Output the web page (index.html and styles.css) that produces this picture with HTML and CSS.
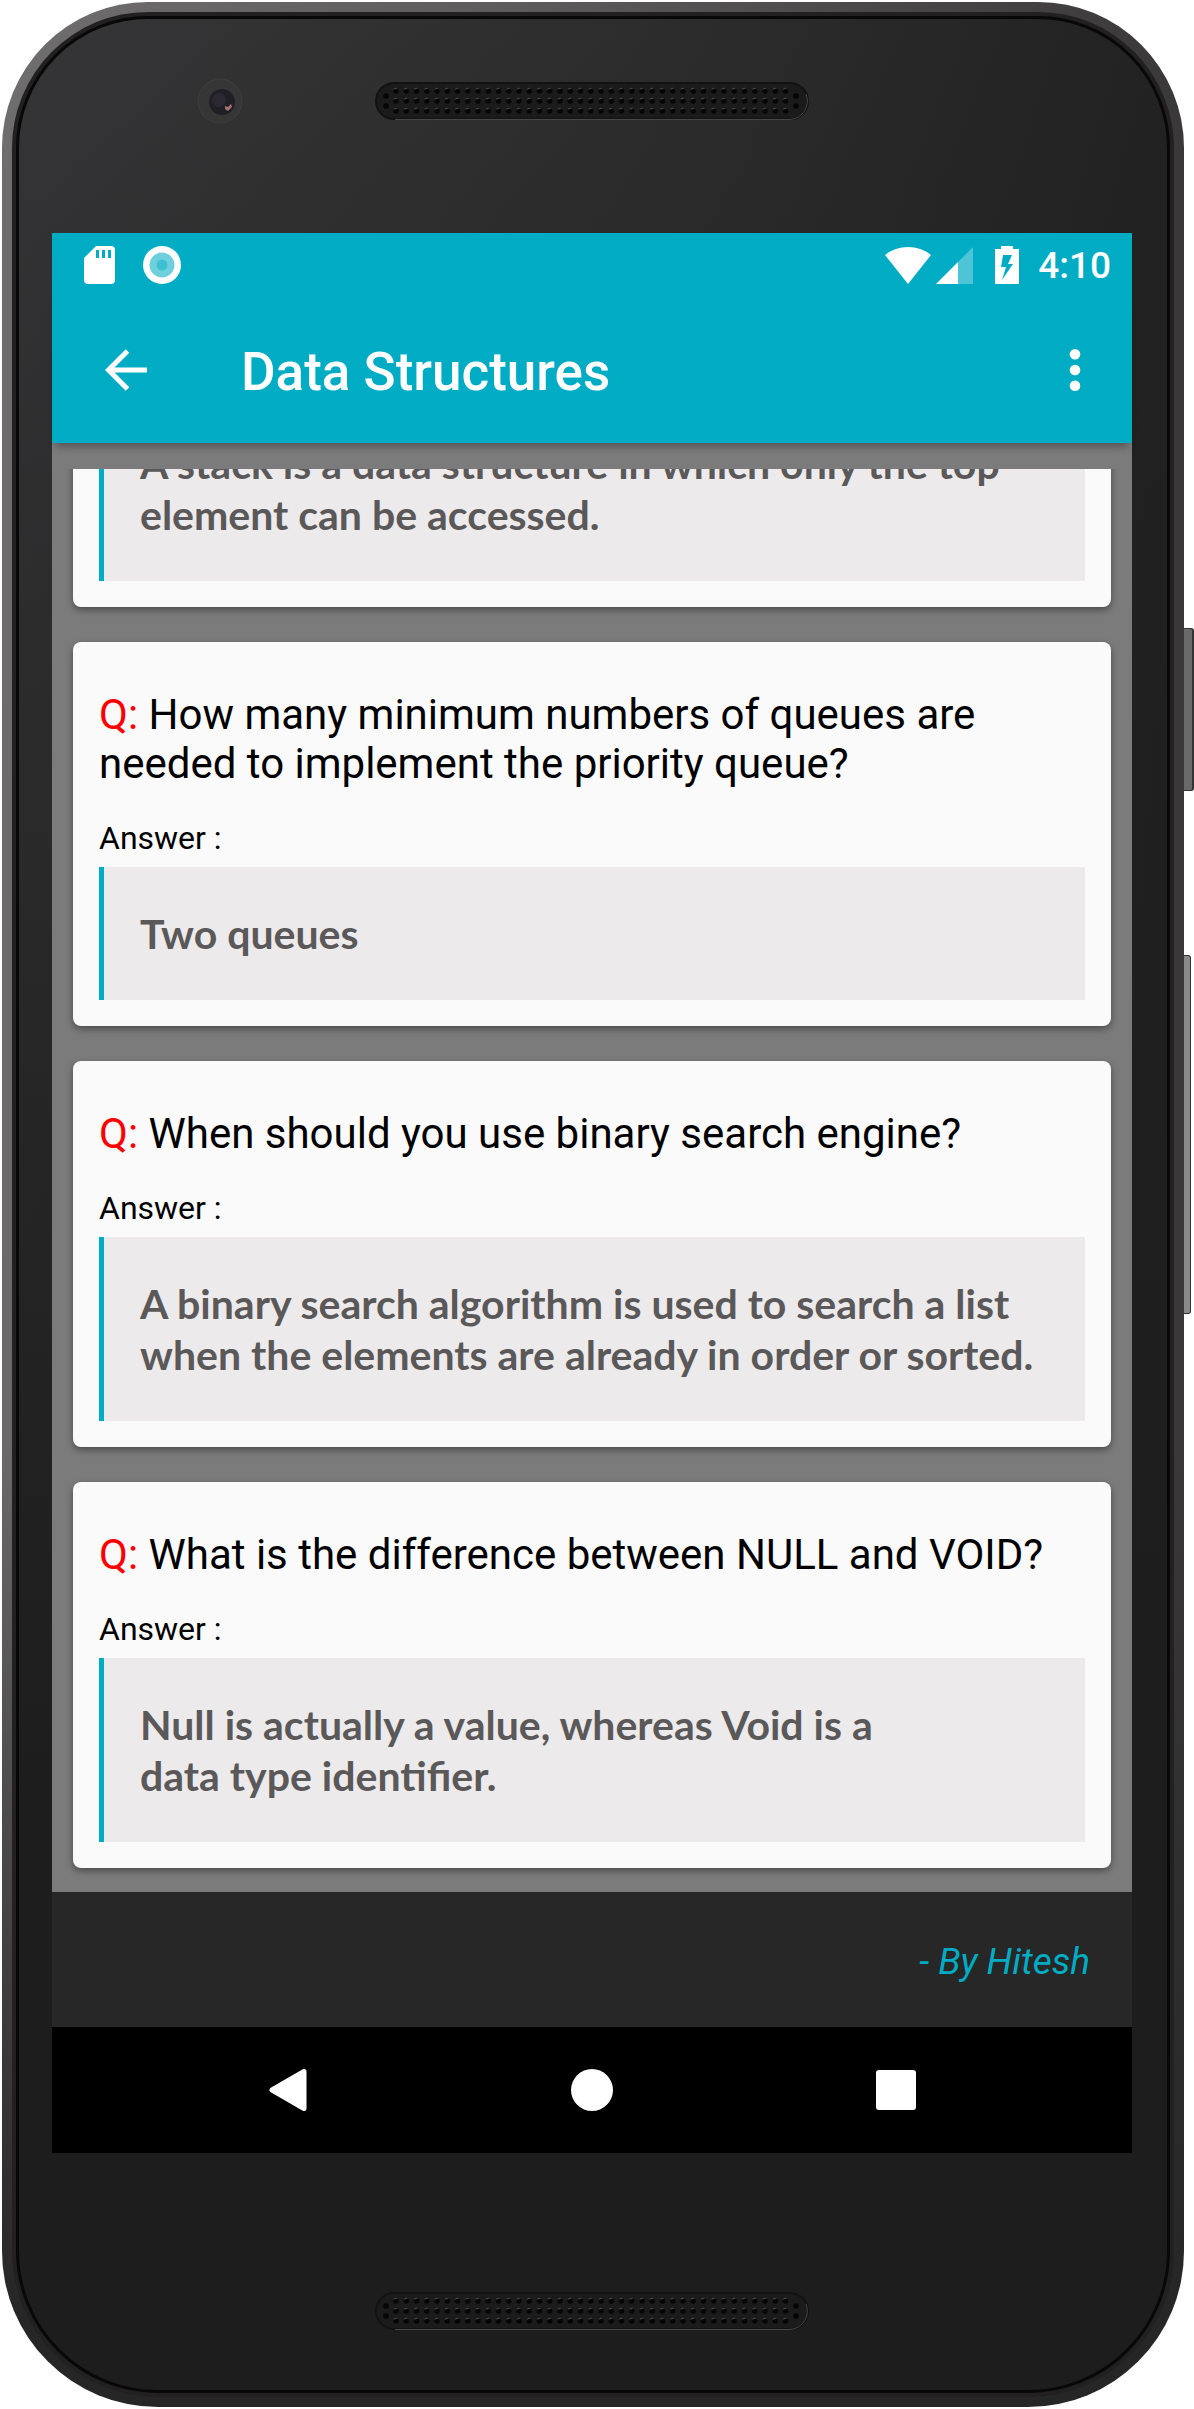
FILE: index.html
```html
<!DOCTYPE html>
<html lang="en">
<head>
<meta charset="utf-8">
<meta name="viewport" content="width=device-width, initial-scale=1">
<title>Data Structures</title>
<link rel="stylesheet" href="styles.css">
</head>
<body>
<div class="phone">
  <span class="side-key side-key-power"></span>
  <span class="side-key side-key-volume"></span>
  <div class="rim">
    <div class="face">
      <div class="bezel bezel-top">
        <svg class="camera" viewBox="0 0 46 46" aria-hidden="true">
          <circle cx="23" cy="23" r="22" fill="#363637" stroke="#3e3e3f"/>
          <circle cx="25" cy="24" r="13" fill="#211f26"/>
          <circle cx="22" cy="22" r="7" fill="#2b2833"/>
          <path d="M28 28l3 1 3-3 1 3-4 4-3-2z" fill="#a8726f"/>
        </svg>
        <svg class="speaker" viewBox="0 0 434 38" aria-hidden="true">
          <defs>
            <pattern id="holes" x="16" y="4" width="10.25" height="10" patternUnits="userSpaceOnUse">
              <circle cx="5" cy="5" r="2.8" fill="#050505"/>
              <path d="M3 3.4a3 3 0 0 1 3-1" stroke="#4a4a4a" fill="none"/>
            </pattern>
            <g id="grille">
              <rect x="1" y="1" width="432" height="36" rx="18" fill="#1b1b1b" stroke="#121212" stroke-width="2"/>
              <path d="M20 37.500H415A18.500 18.500 0 0 0 431 12" fill="none" stroke="#484848"/>
              <rect x="16" y="4" width="399.750" height="30" fill="url(#holes)"/>
              <g fill="#050505">
                <circle cx="11" cy="14" r="2.800"/><circle cx="11" cy="24" r="2.800"/>
                <circle cx="421" cy="14" r="2.800"/><circle cx="421" cy="24" r="2.800"/>
              </g>
            </g>
          </defs>
          <use href="#grille"/>
        </svg>
      </div>

      <div class="screen">
        <div class="status-bar">
          <div class="status-group status-left">
            <svg width="32" height="38" viewBox="0 0 32 38" role="img" aria-label="SD card">
              <path fill="#fff" fill-rule="evenodd" d="M12 0H27a4 4 0 0 1 4 4V34a4 4 0 0 1-4 4H4a4 4 0 0 1-4-4V12zM12 4v8h3V4zM18 4v8h3V4zM24 4v8h3V4z"/>
            </svg>
            <svg width="38" height="38" viewBox="0 0 38 38" role="img" aria-label="Sync">
              <circle cx="19" cy="19" r="19" fill="#fff"/>
              <circle cx="19" cy="19" r="12.500" fill="#6fd0dd"/>
              <circle cx="19" cy="19" r="5.500" fill="#3fc0d0"/>
            </svg>
          </div>
          <div class="status-group status-right">
            <svg width="46" height="38" viewBox="0 0 46 38" role="img" aria-label="Wi-Fi">
              <path fill="#fff" d="M0 9Q10 1 23 1T46 9L23 38z"/>
            </svg>
            <svg width="38" height="38" viewBox="0 0 38 38" role="img" aria-label="Mobile signal">
              <path fill="#fff" fill-opacity=".3" d="M37 1V38H22V16z"/>
              <path fill="#fff" d="M22 16V38H0z"/>
            </svg>
            <svg class="battery" width="24" height="38" viewBox="0 0 24 38" role="img" aria-label="Battery charging">
              <path fill="#fff" fill-rule="evenodd" d="M6 0H18V3H24V38H0V3H6zM8 9L6 21H11L7 34L18 18H13L17 9z"/>
            </svg>
            <span class="clock">4:10</span>
          </div>
        </div>

        <header class="app-bar">
          <button class="icon-button back" type="button" aria-label="Back">
            <svg width="42" height="42" viewBox="0 0 42 42"><path d="M42 21H4M22.500 2L3.500 21L22.500 40" fill="none" stroke="#fff" stroke-width="5"/></svg>
          </button>
          <h1 class="title">Data Structures</h1>
          <button class="icon-button more" type="button" aria-label="More options">
            <svg width="12" height="42" viewBox="0 0 12 42" fill="#fff"><circle cx="6" cy="5.300" r="5.300"/><circle cx="6" cy="21" r="5.300"/><circle cx="6" cy="36.700" r="5.300"/></svg>
          </button>
        </header>

        <main class="feed">
          <div class="cards">
            <article class="card">
              <p class="answer">A stack is a data structure in which only the top element can be accessed.</p>
            </article>
            <article class="card">
              <h2 class="question"><span class="mark">Q:</span> How many minimum numbers of queues are needed to implement the priority queue?</h2>
              <p class="label">Answer :</p>
              <p class="answer">Two queues</p>
            </article>
            <article class="card">
              <h2 class="question"><span class="mark">Q:</span> When should you use binary search engine?</h2>
              <p class="label">Answer :</p>
              <p class="answer">A binary search algorithm is used to search a list when the elements are already in order or sorted.</p>
            </article>
            <article class="card">
              <h2 class="question"><span class="mark">Q:</span> What is the difference between NULL and VOID?</h2>
              <p class="label">Answer :</p>
              <p class="answer">Null is actually a value, whereas Void is a<br>data type identifier.</p>
            </article>
          </div>
        </main>

        <footer class="byline">- By Hitesh</footer>

        <nav class="nav-bar" aria-label="System">
          <button class="nav-button" type="button" aria-label="Back">
            <svg width="42" height="42" viewBox="0 0 42 42"><path d="M5 21L37 2.500V39.500z" fill="#fff" stroke="#fff" stroke-width="5" stroke-linejoin="round"/></svg>
          </button>
          <button class="nav-button" type="button" aria-label="Home">
            <svg width="42" height="42" viewBox="0 0 42 42"><circle cx="21" cy="21" r="21" fill="#fff"/></svg>
          </button>
          <button class="nav-button" type="button" aria-label="Recent apps">
            <svg width="42" height="42" viewBox="0 0 42 42"><rect x="1" y="1" width="40" height="40" rx="3" fill="#fff"/></svg>
          </button>
        </nav>
      </div>

      <div class="bezel bezel-bottom">
        <svg class="speaker" viewBox="0 0 434 38" aria-hidden="true"><use href="#grille"/></svg>
      </div>
    </div>
  </div>
</div>
</body>
</html>
```
FILE: styles.css
```css
:root {
  --accent: #00acc4;
}

* {
  box-sizing: border-box;
}

body {
  margin: 0;
  padding: 2px 10px 2px 2px;
  height: 100vh;
  background: #fff;
  font-family: Roboto, "Liberation Sans", sans-serif;
}

h1, h2, p {
  margin: 0;
  font-weight: 400;
}

button {
  border: 0;
  padding: 0;
  background: none;
  display: flex;
  align-items: center;
  justify-content: center;
}

svg {
  display: block;
}

/* Device shell */
.phone {
  position: relative;
  height: 100%;
  padding: 10px;
  border-radius: 146px 146px 156px 156px;
  background:
    linear-gradient(180deg, transparent 60%, #262626 96%),
    linear-gradient(95deg, #6f6d6e 0%, #5e5c5d 35%, #3a3839 85%);
}

.side-key {
  position: absolute;
  left: 100%;
  border: 1px solid #333;
  border-left: 0;
  border-radius: 0 3px 3px 0;
  background: #6a6a6a;
}

.side-key-power {
  top: 626px;
  width: 10px;
  height: 163px;
  border-right-width: 2px;
}

.side-key-volume {
  top: 953px;
  width: 7px;
  height: 359px;
  background: #8a8a8a;
}

.rim {
  height: 100%;
  padding: 4px;
  border-radius: 136px 136px 146px 146px;
  background: #222021;
}

.face {
  display: flex;
  flex-direction: column;
  height: 100%;
  padding: 0 35px 0 33px;
  border: 3px solid #080808;
  border-radius: 132px 132px 142px 142px;
  background:
    linear-gradient(180deg, transparent, #1d1d1d 75%),
    linear-gradient(95deg, #353537, #2d2d2d 45%, #212121 90%);
}

.bezel {
  flex: none;
}

.bezel-top {
  display: grid;
  grid-template-columns: 1fr auto 1fr;
  align-items: center;
  justify-items: center;
  padding: 59px 0 109px;
}

.camera {
  width: 46px;
  margin-left: 12px;
}

.speaker {
  width: 434px;
  height: 38px;
}

.bezel-bottom {
  display: flex;
  justify-content: center;
  padding: 139px 0 60px;
}

/* App */
.screen {
  display: flex;
  flex: 1;
  flex-direction: column;
  min-height: 0;
  background: #7b7b7b;
}

.status-bar {
  display: flex;
  flex: none;
  align-items: center;
  justify-content: space-between;
  height: 63px;
  padding: 0 21px 0 32px;
  background: var(--accent);
  color: #fff;
}

.status-group {
  display: flex;
  align-items: center;
}

.status-left {
  gap: 27px;
}

.status-right {
  gap: 5px;
}

.battery {
  margin: 0 14px 0 16px;
}

.clock {
  padding-top: 2px;
  font-size: 37px;
  font-weight: 500;
  line-height: 44px;
}

.app-bar {
  display: flex;
  flex: none;
  align-items: center;
  height: 147px;
  background: var(--accent);
  color: #fff;
  box-shadow: 0 8px 8px -4px rgba(0, 0, 0, .3);
}

.icon-button {
  height: 147px;
}

.back {
  width: 147px;
}

.more {
  width: 114px;
}

.title {
  flex: 1;
  padding: 4px 0 0 42px;
  font-size: 53px;
  font-weight: 500;
  line-height: 62px;
}

/* Opens at the newest card: a reversed column starts scrolled to its end */
.feed {
  display: flex;
  flex: 1;
  flex-direction: column-reverse;
  min-height: 0;
  margin-top: 26px;
  overflow-y: auto;
  scrollbar-width: none;
}

.cards {
  display: flex;
  flex-direction: column;
  gap: 35px;
  padding: 24px 21px;
}

.card {
  padding: 48px 26px 26px;
  border-radius: 8px;
  background: #fafafa;
  box-shadow: 0 3px 7px rgba(0, 0, 0, .4);
}

.question {
  font-size: 42px;
  line-height: 49px;
  color: #000;
}

.mark {
  color: #f00;
}

.label {
  margin: 32px 0 10px;
  font-size: 32px;
  line-height: 37px;
}

.answer {
  padding: 41px 36px;
  border-left: 5px solid var(--accent);
  background: #eceaeb;
  color: #5a5858;
  font-family: Lato, "Open Sans", sans-serif;
  font-size: 41px;
  font-weight: 700;
  line-height: 51px;
}

.byline {
  flex: none;
  padding: 48px 42px 44px;
  background: #272727;
  color: var(--accent);
  font-size: 37px;
  font-style: italic;
  line-height: 43px;
  text-align: right;
}

.nav-bar {
  display: flex;
  flex: none;
  justify-content: center;
  background: #000;
}

.nav-button {
  width: 304px;
  height: 126px;
}
```
